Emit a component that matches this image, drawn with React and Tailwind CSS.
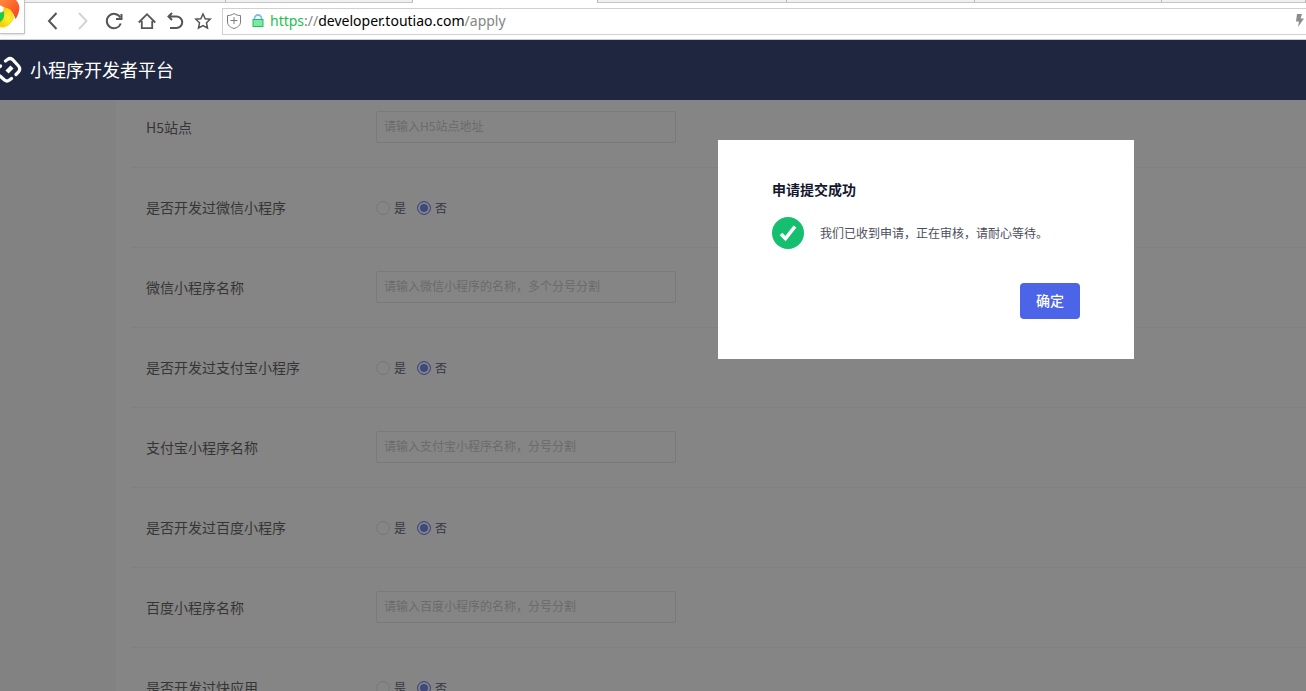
import { useState } from "react";

const tabs = [
  { id: 1, className: "w-[226px]" },
  { id: 2, className: "w-[187px]" },
  { id: 3, className: "w-[185px]", active: true },
  { id: 4, className: "w-[189px]" },
  { id: 5, className: "w-[188px]" },
  { id: 6, className: "w-[187px]" },
  { id: 7, className: "flex-1" },
];

const fields = [
  { name: "h5", label: "H5站点", type: "text", placeholder: "请输入H5站点地址" },
  { name: "wechat", label: "是否开发过微信小程序", type: "radio" },
  { name: "wechatName", label: "微信小程序名称", type: "text", placeholder: "请输入微信小程序的名称，多个分号分割" },
  { name: "alipay", label: "是否开发过支付宝小程序", type: "radio" },
  { name: "alipayName", label: "支付宝小程序名称", type: "text", placeholder: "请输入支付宝小程序名称，分号分割" },
  { name: "baidu", label: "是否开发过百度小程序", type: "radio" },
  { name: "baiduName", label: "百度小程序名称", type: "text", placeholder: "请输入百度小程序的名称，分号分割" },
  { name: "quickApp", label: "是否开发过快应用", type: "radio" },
];

function BrowserLogo() {
  return (
    <div className="absolute left-0 top-0 h-[34px] w-[25px] overflow-hidden border-r border-b border-[#c4c4c4] bg-white shadow-sm">
      <svg width="24" height="33" viewBox="0 0 24 33">
        <defs>
          <linearGradient id="petalRed" x1="0" y1="0" x2="1" y2="1">
            <stop offset="0" stopColor="#ff8a3c" />
            <stop offset="1" stopColor="#f5401c" />
          </linearGradient>
          <radialGradient id="petalYellow" cx="0.6" cy="0.5" r="0.6">
            <stop offset="0" stopColor="#fff23a" />
            <stop offset="1" stopColor="#f5cf00" />
          </radialGradient>
        </defs>
        <path d="M0 0H16C19 3 20 7 19 11C18 15 17 17 15.500 19C14 14 11 9 3 7L0 7Z" fill="url(#petalRed)" />
        <path d="M3 8C9 7 13 11 14 18C11 25 5 29 0 27V20Z" fill="url(#petalYellow)" />
        <path d="M0 9C3 9 4.500 12 4 16C3.500 19 2 21 0 22Z" fill="#1ec84b" />
        <circle cx="0" cy="9" r="3.500" fill="#fff" />
      </svg>
    </div>
  );
}

function NavIcon({ label, className, children }) {
  return (
    <button type="button" aria-label={label} className={`h-5 w-5 shrink-0 ${className}`}>
      <svg width="20" height="20" viewBox="0 0 20 20" fill="none" stroke="currentColor" strokeWidth="2">
        {children}
      </svg>
    </button>
  );
}

function BrowserBar() {
  return (
    <div className="relative z-20 h-10 shrink-0 border-b border-[#c9cdd2] bg-white">
      <div className="flex h-[3px]">
        {tabs.map((tab) => (
          <div
            key={tab.id}
            className={`border-r border-[#b8b8b8] ${tab.className} ${
              tab.active ? "bg-white" : "border-b border-b-[#c6c6c6] bg-[#f0f0f0]"
            }`}
          />
        ))}
      </div>
      <BrowserLogo />

      <div className="flex h-9 items-center pl-[43px]">
        <NavIcon label="后退" className="text-[#555]">
          <path d="M13.500 2L6 10L13.500 18" />
        </NavIcon>
        <NavIcon label="前进" className="ml-[10px] text-[#d4d4d4]">
          <path d="M6 2L13.500 10L6 18" />
        </NavIcon>
        <NavIcon label="刷新" className="ml-[11px] text-[#555]">
          <path d="M16.300 6.500A7.200 7.200 0 1 0 16.800 12.500" />
          <path d="M17.500 3V8H12" />
        </NavIcon>
        <NavIcon label="主页" className="ml-[13px] text-[#555]">
          <path strokeWidth="1.800" d="M1.800 11.500L10 3.200L18.200 11.500M4.800 10V17.200H15.200V10" />
        </NavIcon>
        <NavIcon label="撤销" className="ml-2 text-[#555]">
          <path d="M7 2L3.500 5.500L7 9M3.500 5.500H11.500A5.500 5.500 0 0 1 11.500 17H5" />
        </NavIcon>
        <NavIcon label="收藏" className="ml-2 text-[#555]">
          <path
            strokeWidth="1.500"
            d="M10 3L12.200 7.700L17.200 8.200L13.500 11.800L14.500 17L10 14.500L5.500 17L6.500 11.800L2.800 8.200L7.800 7.700Z"
          />
        </NavIcon>

        <div className="ml-[9px] flex h-[27px] flex-1 items-center border-y border-l border-[#d0d0d0] pl-[3px]">
          <svg width="16" height="18" viewBox="0 0 16 18" fill="none" stroke="#7c7c7c">
            <path d="M8 1.500C6 3 4 3.500 1.500 3.500V10C1.500 13.500 4.500 15.500 8 16.500C11.500 15.500 14.500 13.500 14.500 10V3.500C12 3.500 10 3 8 1.500Z" />
            <path d="M8 5V12M4.500 8.500H11.500" />
          </svg>
          <svg width="12" height="14" viewBox="0 0 12 14" fill="none" className="ml-[10px]">
            <path d="M2.500 6V4.500A3.500 3.500 0 0 1 9.500 4.500V6" stroke="#7bbdea" strokeWidth="1.800" />
            <rect x="1" y="5.500" width="10" height="7" fill="#7be8a4" stroke="#1cc161" />
          </svg>
          <p className="ml-[6px] flex-1 text-[14px] leading-5 font-['Noto_Sans',sans-serif] text-[#858585]">
            <span className="text-[#19c24b]">https</span>://
            <span className="text-black">developer.toutiao.com</span>/apply
          </p>
          <svg width="9" height="14" viewBox="0 0 9 14" className="mr-[2px]">
            <path d="M2 0H7L5.500 4.500H9L3 13L4 7.500H1Z" fill="#8b8b8b" />
          </svg>
        </div>
      </div>
    </div>
  );
}

function SiteHeader() {
  return (
    <header className="relative z-20 flex h-[60px] shrink-0 items-center bg-[#1f2640] text-white">
      <svg width="22" height="28" viewBox="0 0 22 28" fill="none" stroke="#fff" strokeWidth="3.200" strokeLinecap="round">
        <path d="M5.500 5L7.500 3.500Q10 1.500 12.500 3.500L18.500 10Q21 13 18.500 16L16 18.500" />
        <path d="M0 10.500L0.500 10" />
        <path d="M0 20L4.500 24Q7 26 9.500 24L11.500 22.500" />
        <path d="M7 16L12 11" strokeWidth="4.500" strokeLinecap="butt" />
      </svg>
      <h1 className="ml-2 pb-[2px] text-[18px] leading-6">小程序开发者平台</h1>
    </header>
  );
}

function RadioGroup({ field, value, onChange }) {
  return (
    <div role="radiogroup" aria-labelledby={`${field.name}-label`} className="flex items-center gap-[11px]">
      {["是", "否"].map((option) => (
        <label key={option} className="flex items-center gap-1 text-xs text-[#2f3550]">
          <input
            type="radio"
            name={field.name}
            value={option}
            checked={value === option}
            onChange={() => onChange(field.name, option)}
            className="h-[14px] w-[14px] appearance-none rounded-full border border-[#dcdcdc] bg-white checked:border-[#4e64e9] checked:bg-[#4e64e9] checked:shadow-[inset_0_0_0_2px_#fff]"
          />
          {option}
        </label>
      ))}
    </div>
  );
}

function FormRow({ field, value, onChange }) {
  return (
    <div className="flex h-20 shrink-0 items-center border-b border-[#f3f3f3] pl-[15px]">
      {field.type === "text" ? (
        <>
          <label htmlFor={field.name} className="w-[230px] shrink-0 pb-[2px] text-sm text-[#333]">
            {field.label}
          </label>
          <div className="pb-[2px]">
            <input
              id={field.name}
              type="text"
              placeholder={field.placeholder}
              value={value}
              onChange={(e) => onChange(field.name, e.target.value)}
              className="block h-8 w-[300px] rounded-xs border border-[#e2e2e2] bg-white px-[7px] pb-[2px] text-xs text-[#333] outline-none placeholder:text-[#bbb]"
            />
          </div>
        </>
      ) : (
        <>
          <span id={`${field.name}-label`} className="w-[230px] shrink-0 pb-[2px] text-sm text-[#333]">
            {field.label}
          </span>
          <RadioGroup field={field} value={value} onChange={onChange} />
        </>
      )}
    </div>
  );
}

function SuccessDialog({ onClose }) {
  return (
    <div className="absolute inset-0 z-10 flex items-start justify-end bg-[#373737]/61 pt-10 pr-[172px]">
      <div role="dialog" aria-labelledby="dialog-title" className="w-[416px] bg-white px-[54px] py-10">
        <h2 id="dialog-title" className="pb-[2px] text-sm leading-[18px] font-bold text-[#14182e]">
          申请提交成功
        </h2>
        <div className="mt-[17px] flex items-center gap-4">
          <svg width="32" height="32" viewBox="0 0 32 32" fill="none">
            <circle cx="16" cy="16" r="16" fill="#15bf6f" />
            <path d="M9 17L13.500 21.500L23 9.500" stroke="#fff" strokeWidth="3.600" />
          </svg>
          <p className="text-xs text-[#4a4d5c]">我们已收到申请，正在审核，请耐心等待。</p>
        </div>
        <div className="mt-[34px] flex justify-end">
          <button
            type="button"
            onClick={onClose}
            className="h-9 w-[60px] rounded bg-[#4c64e8] pb-[2px] text-sm font-medium text-white"
          >
            确定
          </button>
        </div>
      </div>
    </div>
  );
}

function App() {
  const [dialogOpen, setDialogOpen] = useState(true);
  const [values, setValues] = useState({
    wechat: "否",
    alipay: "否",
    baidu: "否",
    quickApp: "否",
  });

  const handleChange = (name, value) => {
    setValues((prev) => ({ ...prev, [name]: value }));
  };

  return (
    <div className="flex h-screen w-full flex-col overflow-hidden bg-white font-['Noto_Sans_CJK_SC',sans-serif]">
      <BrowserBar />
      <SiteHeader />
      <main className="relative flex-1 overflow-hidden bg-[#f6f6f6] pl-[116px]">
        <form className="-mt-3 flex flex-col bg-white pl-[15px]">
          {fields.map((field) => (
            <FormRow
              key={field.name}
              field={field}
              value={values[field.name] || ""}
              onChange={handleChange}
            />
          ))}
        </form>
        {dialogOpen && <SuccessDialog onClose={() => setDialogOpen(false)} />}
      </main>
    </div>
  );
}

export default App;
